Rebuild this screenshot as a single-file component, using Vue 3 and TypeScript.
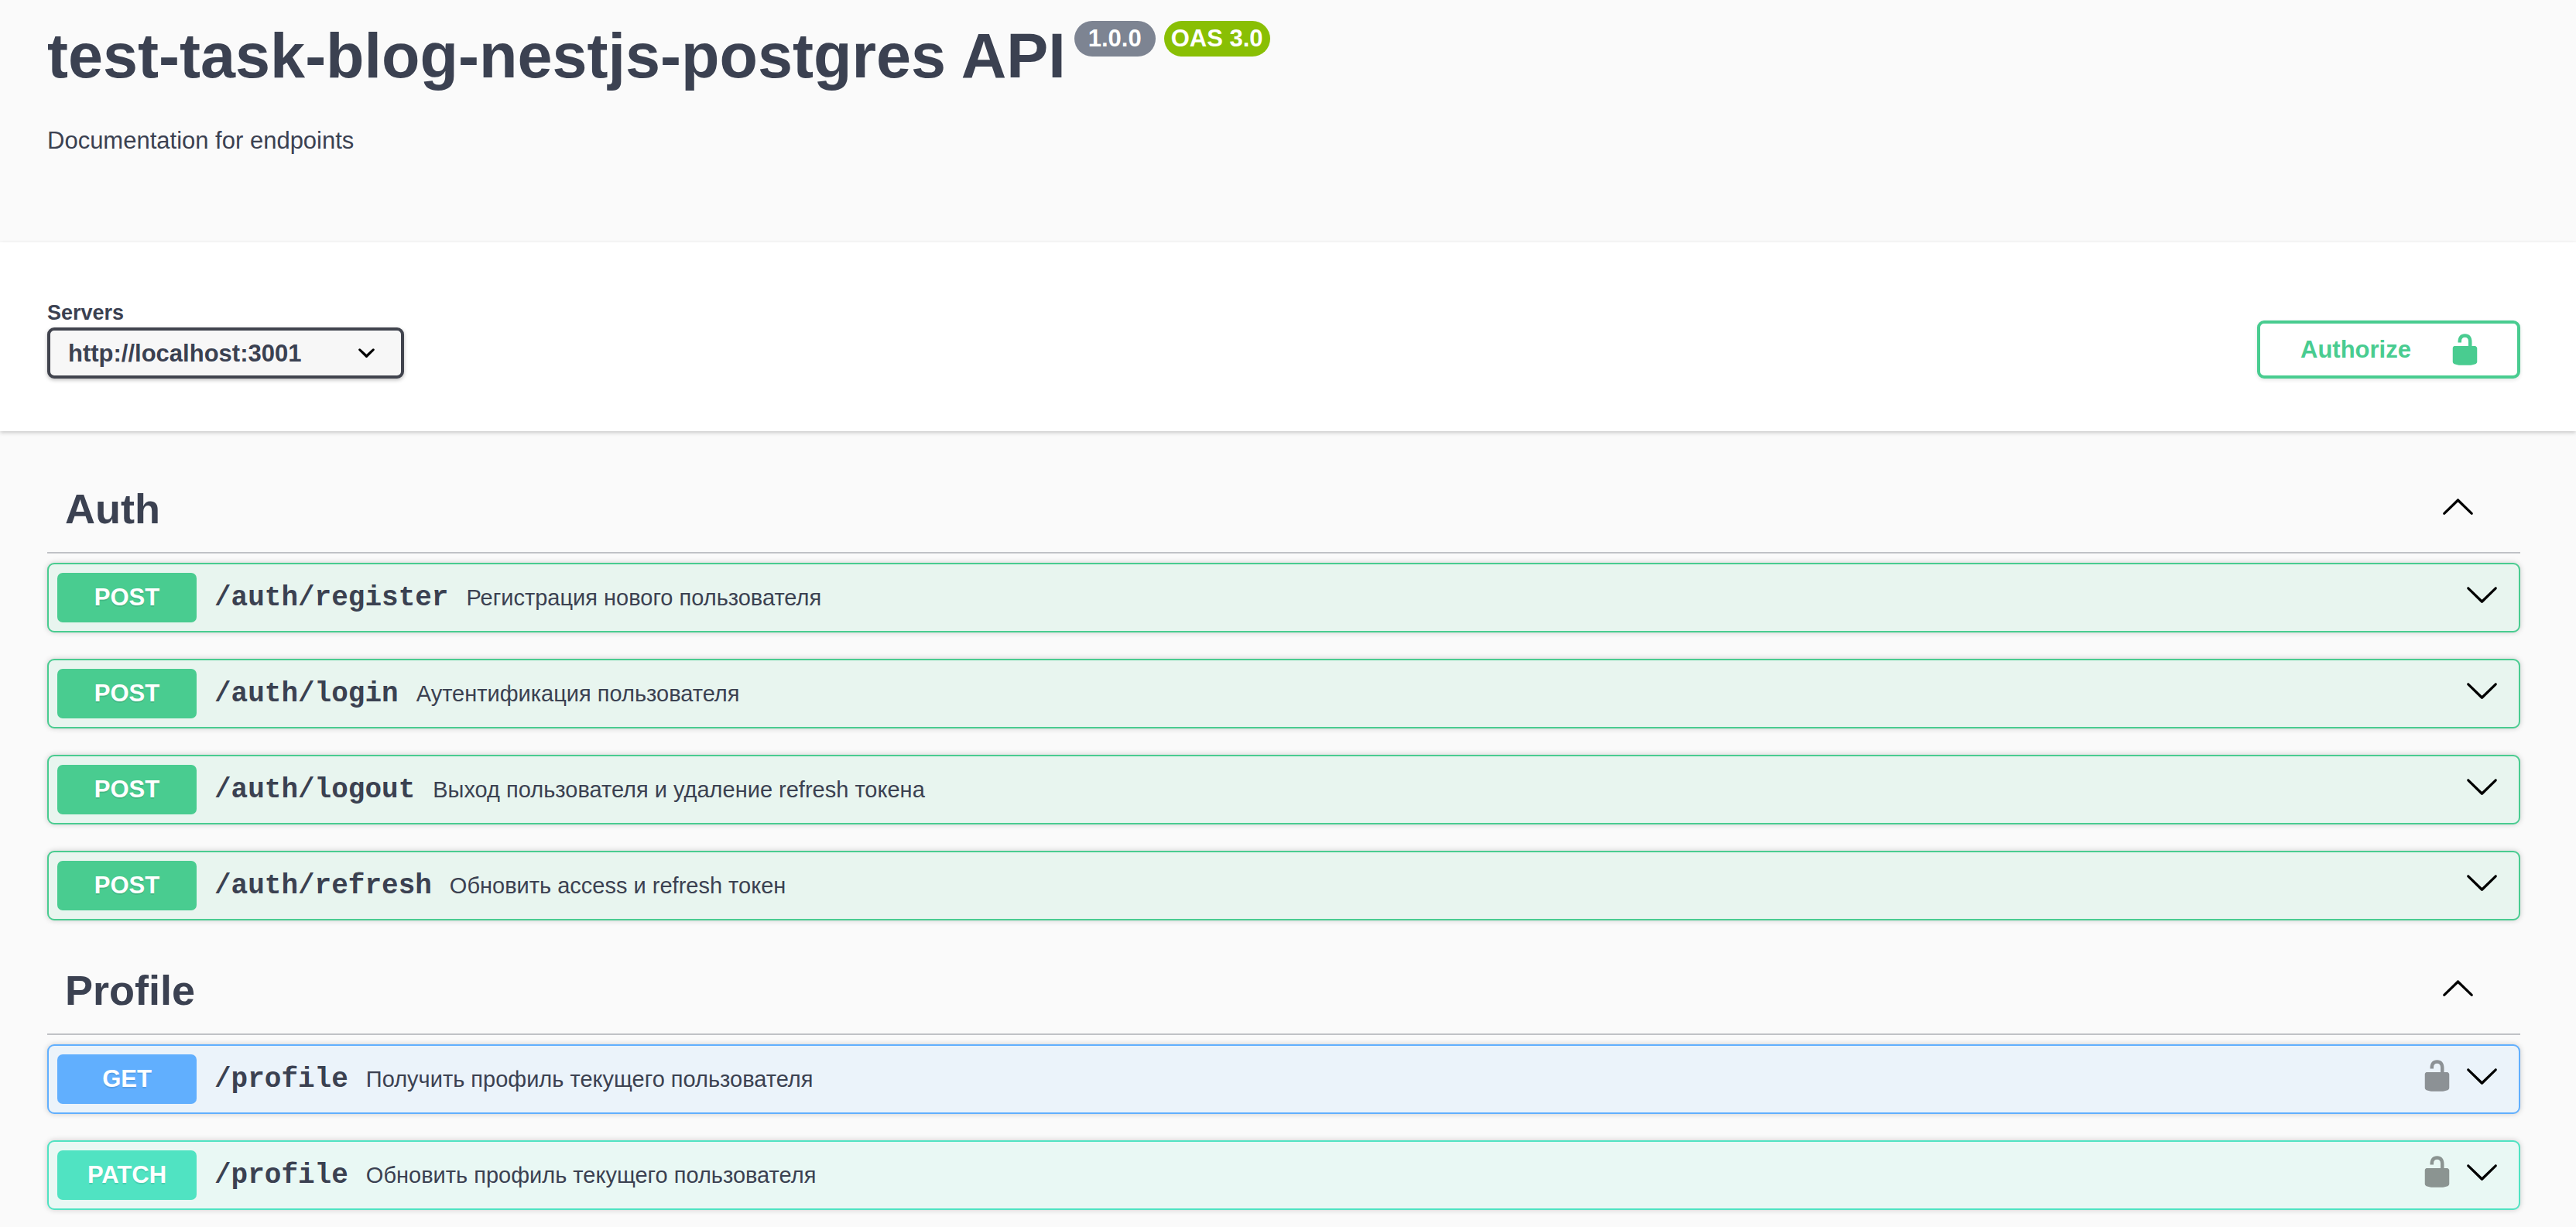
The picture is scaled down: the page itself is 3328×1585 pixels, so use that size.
<script setup lang="ts">
import { ref } from 'vue'

type Method = 'post' | 'get' | 'patch'

interface Operation {
  method: Method
  path: string
  summary: string
  secured: boolean
}

interface Section {
  name: string
  open: boolean
  operations: Operation[]
}

const servers = ['http://localhost:3001']
const server = ref(servers[0])

const sections = ref<Section[]>([
  {
    name: 'Auth',
    open: true,
    operations: [
      { method: 'post', path: '/auth/register', summary: 'Регистрация нового пользователя', secured: false },
      { method: 'post', path: '/auth/login', summary: 'Аутентификация пользователя', secured: false },
      { method: 'post', path: '/auth/logout', summary: 'Выход пользователя и удаление refresh токена', secured: false },
      { method: 'post', path: '/auth/refresh', summary: 'Обновить access и refresh токен', secured: false },
    ],
  },
  {
    name: 'Profile',
    open: true,
    operations: [
      { method: 'get', path: '/profile', summary: 'Получить профиль текущего пользователя', secured: true },
      { method: 'patch', path: '/profile', summary: 'Обновить профиль текущего пользователя', secured: true },
    ],
  },
])

const arrowUp =
  'M17.418 14.908c.272.268.709.268.979 0s.271-.701 0-.969l-7.908-7.83c-.27-.268-.707-.268-.979 0l-7.908 7.83c-.27.268-.27.701 0 .969.271.268.709.268.979 0L10 7.767l7.418 7.141z'
const arrowDown =
  'M17.418 6.109c.272-.268.709-.268.979 0s.271.701 0 .969l-7.908 7.83c-.27.268-.707.268-.979 0l-7.908-7.83c-.27-.268-.27-.701 0-.969.271-.268.709-.268.979 0L10 13.25l7.418-7.141z'
const smallArrow =
  'M13.418 7.859a.695.695 0 01.978 0 .68.68 0 010 .969l-3.908 3.83a.697.697 0 01-.979 0l-3.908-3.83a.68.68 0 010-.969.695.695 0 01.978 0L10 11l3.418-3.141z'
const unlocked =
  'M15.8 8H14V5.6C14 2.703 12.665 1 10 1 7.334 1 6 2.703 6 5.6V6h2v-.801C8 3.754 8.797 3 10 3c1.203 0 2 .754 2 2.199V8H4c-.553 0-1 .646-1 1.199V17c0 .549.428 1.139.951 1.307l1.197.387C5.672 18.861 6.55 19 7.1 19h5.8c.549 0 1.428-.139 1.951-.307l1.196-.387c.524-.167.953-.757.953-1.306V9.199C17 8.646 16.352 8 15.8 8z'
</script>

<template>
  <div class="page">
    <header class="info">
      <div class="title-row">
        <h1 class="title">test-task-blog-nestjs-postgres API</h1>
        <span class="version">1.0.0</span>
        <span class="version oas">OAS 3.0</span>
      </div>
      <p class="description">Documentation for endpoints</p>
    </header>

    <section class="schemes">
      <div class="servers">
        <label class="servers-label" for="servers">Servers</label>
        <div class="select-wrap">
          <select id="servers" v-model="server" class="select">
            <option v-for="s in servers" :key="s" :value="s">{{ s }}</option>
          </select>
          <svg class="icon select-arrow" viewBox="0 0 20 20" aria-hidden="true"><path :d="smallArrow" /></svg>
        </div>
      </div>
      <button type="button" class="authorize">
        <span>Authorize</span>
        <svg class="icon" viewBox="0 0 20 20" aria-hidden="true"><path :d="unlocked" /></svg>
      </button>
    </section>

    <main class="operations">
      <section v-for="section in sections" :key="section.name" class="tag-section">
        <h2 class="tag">
          <button type="button" class="tag-toggle" :aria-expanded="section.open" @click="section.open = !section.open">
            <span>{{ section.name }}</span>
            <svg class="icon" viewBox="0 0 20 20" aria-hidden="true">
              <path :d="section.open ? arrowUp : arrowDown" />
            </svg>
          </button>
        </h2>
        <div v-if="section.open" class="blocks">
          <div v-for="op in section.operations" :key="op.method + op.path" class="block" :class="op.method">
            <button type="button" class="summary">
              <span class="method">{{ op.method.toUpperCase() }}</span>
              <span class="path">{{ op.path }}</span>
              <span class="text">{{ op.summary }}</span>
            </button>
            <button v-if="op.secured" type="button" class="icon-button lock" aria-label="Authorization button unlocked">
              <svg class="icon" viewBox="0 0 20 20" aria-hidden="true"><path :d="unlocked" /></svg>
            </button>
            <button type="button" class="icon-button" aria-label="Expand operation">
              <svg class="icon" viewBox="0 0 20 20" aria-hidden="true"><path :d="arrowDown" /></svg>
            </button>
          </div>
        </div>
      </section>
    </main>
  </div>
</template>

<style>
body {
  margin: 0;
  background: #fafafa;
}
</style>

<style scoped>
.page {
  color: #3b4151;
  font-family: "Liberation Sans", Arial, sans-serif;
}

button,
select {
  margin: 0;
  padding: 0;
  border: 0;
  background: none;
  color: inherit;
  font: inherit;
  cursor: pointer;
}

.icon {
  display: block;
  flex: none;
  width: 45px;
  height: 45px;
  fill: currentColor;
}

.info {
  padding: 27px 72px 113px 61px;
}

.title-row {
  display: flex;
  align-items: flex-start;
  gap: 11px;
}

.title {
  margin: 0;
  font-size: 81px;
  line-height: 90px;
}

.version {
  padding: 0 18px;
  border-radius: 23px;
  background: #7d8492;
  color: #fff;
  font-size: 31px;
  font-weight: 700;
  line-height: 46px;
}

.oas {
  padding: 0 9px;
  background: #89bf04;
}

.description {
  margin: 47px 0 0;
  font-size: 31px;
  line-height: 36px;
}

.schemes {
  display: flex;
  align-items: flex-end;
  justify-content: space-between;
  padding: 75px 72px 68px 61px;
  background: #fff;
  box-shadow: 0 2px 5px rgba(0, 0, 0, 0.2);
}

.servers {
  display: flex;
  flex-direction: column;
  gap: 3px;
}

.servers-label {
  font-size: 27px;
  font-weight: 700;
  line-height: 32px;
}

.select-wrap {
  position: relative;
}

.select {
  display: block;
  width: 461px;
  height: 66px;
  padding: 0 90px 0 23px;
  border: 4px solid #41444e;
  border-radius: 9px;
  background: #f7f7f7;
  box-shadow: 0 2px 5px rgba(0, 0, 0, 0.25);
  font-size: 31px;
  font-weight: 700;
  appearance: none;
}

.select-arrow {
  position: absolute;
  top: 10px;
  right: 26px;
  color: #000;
  pointer-events: none;
}

.authorize {
  display: flex;
  align-items: center;
  justify-content: space-between;
  box-sizing: border-box;
  width: 340px;
  height: 75px;
  padding: 0 45px 0 52px;
  border: 4px solid #49cc90;
  border-radius: 9px;
  box-shadow: 0 2px 5px rgba(0, 0, 0, 0.1);
  color: #49cc90;
  font-size: 31px;
  font-weight: 700;
}

.operations {
  display: flex;
  flex-direction: column;
  gap: 34px;
  padding: 44px 72px 22px 61px;
}

.tag {
  margin: 0 0 12px;
  border-bottom: 2px solid rgba(59, 65, 81, 0.3);
  font-size: 54px;
}

.tag-toggle {
  display: flex;
  align-items: center;
  justify-content: space-between;
  width: 100%;
  padding: 0 58px 0 23px;
  line-height: 112px;
}

.tag-toggle .icon {
  margin-bottom: 8px;
  color: #000;
}

.icon-button .icon {
  margin-bottom: 10px;
  color: #000;
}

.blocks {
  display: flex;
  flex-direction: column;
  gap: 34px;
}

.block {
  display: flex;
  align-items: center;
  gap: 13px;
  padding: 11px 25px 11px 11px;
  border: 2px solid var(--accent);
  border-radius: 9px;
  background: var(--tint);
  box-shadow: 0 0 7px rgba(0, 0, 0, 0.19);
}

.post {
  --accent: #49cc90;
  --tint: #e8f5ef;
}

.get {
  --accent: #61affe;
  --tint: #ebf3fa;
}

.patch {
  --accent: #50e3c2;
  --tint: #e9f8f4;
}

.summary {
  display: flex;
  flex: 1;
  align-items: center;
  gap: 23px;
  min-width: 0;
  text-align: left;
}

.method {
  width: 180px;
  border-radius: 7px;
  background: var(--accent);
  color: #fff;
  font-size: 31px;
  font-weight: 700;
  line-height: 64px;
  text-align: center;
  text-shadow: 0 2px 0 rgba(0, 0, 0, 0.1);
}

.path {
  font-family: "Courier New", "Liberation Mono", monospace;
  font-size: 36px;
  font-weight: 700;
}

.text {
  font-size: 29px;
}

.lock {
  opacity: 0.4;
}
</style>
